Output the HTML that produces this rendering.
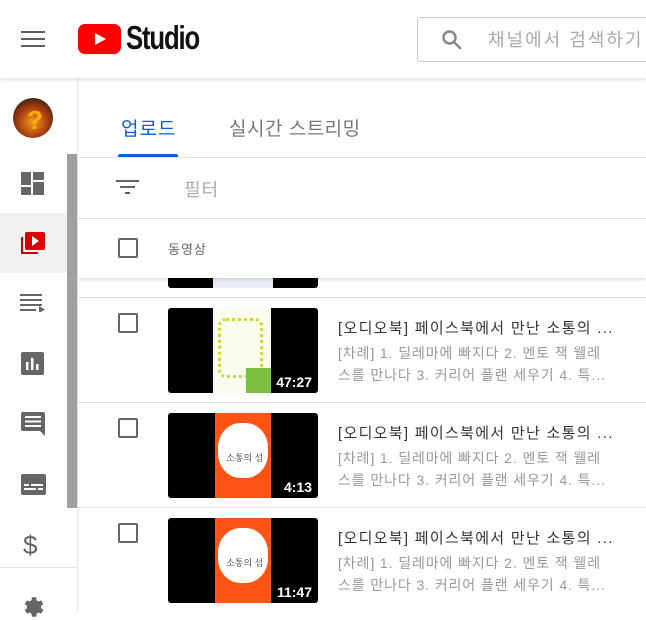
<!DOCTYPE html><html><head><meta charset="utf-8"><style>
*{margin:0;padding:0;box-sizing:border-box}
body{width:646px;height:611px;overflow:hidden;background:#fff;font-family:"Liberation Sans","Noto Sans CJK KR",sans-serif;position:relative}
.a{position:absolute}
.hdr{left:0;top:0;width:646px;height:78px;background:#fff;box-shadow:0 2px 4px rgba(0,0,0,.12);z-index:5}
.t{color:#333;font-size:15px;white-space:nowrap;letter-spacing:1.3px}
.d{color:#999;font-size:14px;line-height:22px;white-space:nowrap;letter-spacing:.9px}
.cb{width:20px;height:20px;border:2px solid #666;border-radius:2px}
.th{width:150px;height:85px;background:#000;border-radius:3px;overflow:hidden}
.dur{right:2px;bottom:2px;background:rgba(0,0,0,.8);color:#fff;font-size:14px;font-weight:bold;padding:1px 4px;border-radius:2px}
.ln{left:78px;width:568px;height:1px;background:#e0e0e0}
</style></head><body>
<div class="a hdr">
 <svg class="a" style="left:21px;top:30px" width="24" height="18"><rect y="1" width="24" height="2" fill="#606060"/><rect y="8" width="24" height="2" fill="#606060"/><rect y="15" width="24" height="2" fill="#606060"/></svg>
 <svg class="a" style="left:78px;top:24px" width="43" height="30"><rect width="43" height="30" rx="7" fill="#f00"/><path d="M17 9 L28 15 L17 21Z" fill="#fff"/></svg>
 <div class="a" style="left:126px;top:19px;font-size:33px;font-weight:bold;color:#111;letter-spacing:-1.5px;transform:scaleX(.78);transform-origin:left">Studio</div>
 <div class="a" style="left:417px;top:17px;width:240px;height:45px;border:1px solid #ccc;border-radius:3px"></div>
 <svg class="a" style="left:440px;top:28px" width="24" height="24" viewBox="0 0 24 24"><circle cx="9.5" cy="9.5" r="6" fill="none" stroke="#888" stroke-width="2.5"/><path d="M14 14 L21 21" stroke="#888" stroke-width="2.5"/></svg>
 <div class="a" style="left:488px;top:26px;font-size:18px;color:#aaa;letter-spacing:2px;white-space:nowrap">채널에서 검색하기</div>
</div>
<!-- sidebar -->
<div class="a" style="left:77px;top:78px;width:1px;height:533px;background:#e5e5e5"></div>
<div class="a" style="left:0;top:213px;width:67px;height:60px;background:#f1f1f1"></div>
<div class="a" style="left:67px;top:154px;width:10px;height:354px;background:#a0a0a0"></div>
<div class="a" style="left:0;top:567px;width:77px;height:1px;background:#e0e0e0"></div>
<div class="a" style="left:13px;top:98px;width:40px;height:40px;border-radius:50%;background:radial-gradient(circle at 50% 60%,#f0a020 0,#b04010 45%,#402010 80%)"></div>
<div class="a" style="left:27px;top:105px;color:#ffb000;font-weight:bold;font-size:26px">?</div>
<svg class="a" style="left:21px;top:172px" width="24" height="24"><rect x="0" y="0" width="10" height="13" fill="#666"/><rect x="12" y="0" width="11" height="8" fill="#666"/><rect x="12" y="10" width="11" height="13" fill="#666"/><rect x="0" y="15" width="10" height="8" fill="#666"/></svg>
<svg class="a" style="left:20px;top:231px" width="26" height="26"><path d="M1 6 V23 H18 V21 H3 V6Z" fill="#c00"/><rect x="5" y="1" width="20" height="18" rx="2" fill="#d00"/><path d="M12 5 L19 10 L12 15Z" fill="#fff"/></svg>
<svg class="a" style="left:20px;top:294px" width="26" height="18"><rect y="0" width="22" height="2" fill="#666"/><rect y="5" width="22" height="2" fill="#666"/><rect y="10" width="22" height="2" fill="#666"/><rect y="15" width="16" height="2" fill="#666"/><path d="M19 12 L25 15.5 L19 19Z" fill="#666"/></svg>
<svg class="a" style="left:21px;top:352px" width="23" height="23"><rect width="23" height="23" rx="2" fill="#666"/><rect x="5" y="10" width="2.5" height="8" fill="#fff"/><rect x="10" y="6" width="2.5" height="12" fill="#fff"/><rect x="15" y="12" width="2.5" height="6" fill="#fff"/></svg>
<svg class="a" style="left:21px;top:412px" width="24" height="24"><path d="M2 0 H22 Q24 0 24 2 V24 L19 19 H2 Q0 19 0 17 V2 Q0 0 2 0Z" fill="#666"/><rect x="4" y="4" width="16" height="2" fill="#fff"/><rect x="4" y="8.5" width="16" height="2" fill="#fff"/><rect x="4" y="13" width="16" height="2" fill="#fff"/></svg>
<svg class="a" style="left:21px;top:474px" width="25" height="21"><rect width="25" height="21" rx="2" fill="#666"/><rect x="3" y="10" width="5" height="2" fill="#fff"/><rect x="10" y="10" width="12" height="2" fill="#fff"/><rect x="3" y="14" width="12" height="2" fill="#fff"/><rect x="17" y="14" width="5" height="2" fill="#fff"/></svg>
<div class="a" style="left:23px;top:530px;font-size:26px;color:#666">$</div>
<svg class="a" style="left:20px;top:594px" width="26" height="26" viewBox="0 0 24 24"><path fill="#666" d="M19.4 13a7 7 0 000-2l2.1-1.6-2-3.5-2.5 1a7.4 7.4 0 00-1.7-1L15 3h-4l-.4 2.9a7.4 7.4 0 00-1.7 1l-2.5-1-2 3.5L6.5 11a7 7 0 000 2l-2.1 1.6 2 3.5 2.5-1a7.4 7.4 0 001.7 1L11 21h4l.4-2.9a7.4 7.4 0 001.7-1l2.5 1 2-3.5z"/></svg>
<!-- tabs -->
<div class="a" style="left:121px;top:114px;font-size:19px;color:#065fd4;letter-spacing:1px">업로드</div>
<div class="a" style="left:229px;top:114px;font-size:19px;color:#777;letter-spacing:.5px;white-space:nowrap">실시간 스트리밍</div>
<div class="a" style="left:118px;top:154px;width:60px;height:4px;background:#065fd4;border-radius:2px 2px 0 0"></div>
<div class="a ln" style="top:157px"></div>
<svg class="a" style="left:116px;top:180px" width="24" height="16"><rect x="0" y="0" width="23" height="2" fill="#606060"/><rect x="4" y="6" width="15" height="2" fill="#606060"/><rect x="9" y="12" width="5" height="2" fill="#606060"/></svg>
<div class="a" style="left:184px;top:176px;font-size:18px;color:#aaa;letter-spacing:1px">필터</div>
<!-- partial row -->
<div class="a" style="left:168px;top:270px;width:150px;height:18px;background:#000;border-radius:3px"></div>
<div class="a" style="left:213px;top:270px;width:60px;height:18px;background:#e8eef4"></div>
<div class="a" style="left:78px;top:218px;width:568px;height:60px;background:#fff;box-shadow:0 2px 3px rgba(0,0,0,.12)"></div>
<div class="a ln" style="top:218px;z-index:2"></div>
<div class="a cb" style="left:118px;top:238px;z-index:2"></div>
<div class="a" style="left:168px;top:239px;font-size:13px;color:#666;z-index:2;letter-spacing:1px">동영상</div>
<div class="a ln" style="top:297px"></div>
<!-- row1 -->
<div class="a cb" style="left:118px;top:313px"></div>
<div class="a th" style="left:168px;top:308px"><div class="a" style="left:45px;top:0;width:58px;height:85px;background:#fbfbf0"></div><div class="a" style="left:50px;top:10px;width:45px;height:60px;border:3px dotted #c8dc30;border-radius:8px"></div><div class="a" style="left:78px;top:60px;width:25px;height:25px;background:#7cc040"></div><div class="a dur">47:27</div></div>
<div class="a t" style="left:338px;top:317px">[오디오북] 페이스북에서 만난 소통의 ...</div>
<div class="a d" style="left:338px;top:342px">[차례] 1. 딜레마에 빠지다 2. 멘토 잭 웰레</div>
<div class="a d" style="left:338px;top:364px">스를 만나다 3. 커리어 플랜 세우기 4. 특...</div>
<div class="a ln" style="top:402px"></div>
<!-- row2 -->
<div class="a cb" style="left:118px;top:418px"></div>
<div class="a th" style="left:168px;top:413px"><div class="a" style="left:47px;top:0;width:56px;height:85px;background:#fd5314"></div><div class="a" style="left:50px;top:10px;width:50px;height:55px;background:#fff;border-radius:45%"></div><div class="a" style="left:58px;top:38px;font-size:9px;color:#333;font-family:'Noto Serif CJK SC',serif">소통의 섬</div><div class="a dur">4:13</div></div>
<div class="a t" style="left:338px;top:422px">[오디오북] 페이스북에서 만난 소통의 ...</div>
<div class="a d" style="left:338px;top:447px">[차례] 1. 딜레마에 빠지다 2. 멘토 잭 웰레</div>
<div class="a d" style="left:338px;top:469px">스를 만나다 3. 커리어 플랜 세우기 4. 특...</div>
<div class="a ln" style="top:507px"></div>
<!-- row3 -->
<div class="a cb" style="left:118px;top:523px"></div>
<div class="a th" style="left:168px;top:518px"><div class="a" style="left:47px;top:0;width:56px;height:85px;background:#fd5314"></div><div class="a" style="left:50px;top:10px;width:50px;height:55px;background:#fff;border-radius:45%"></div><div class="a" style="left:58px;top:38px;font-size:9px;color:#333;font-family:'Noto Serif CJK SC',serif">소통의 섬</div><div class="a dur">11:47</div></div>
<div class="a t" style="left:338px;top:527px">[오디오북] 페이스북에서 만난 소통의 ...</div>
<div class="a d" style="left:338px;top:552px">[차례] 1. 딜레마에 빠지다 2. 멘토 잭 웰레</div>
<div class="a d" style="left:338px;top:574px">스를 만나다 3. 커리어 플랜 세우기 4. 특...</div>
</body></html>
